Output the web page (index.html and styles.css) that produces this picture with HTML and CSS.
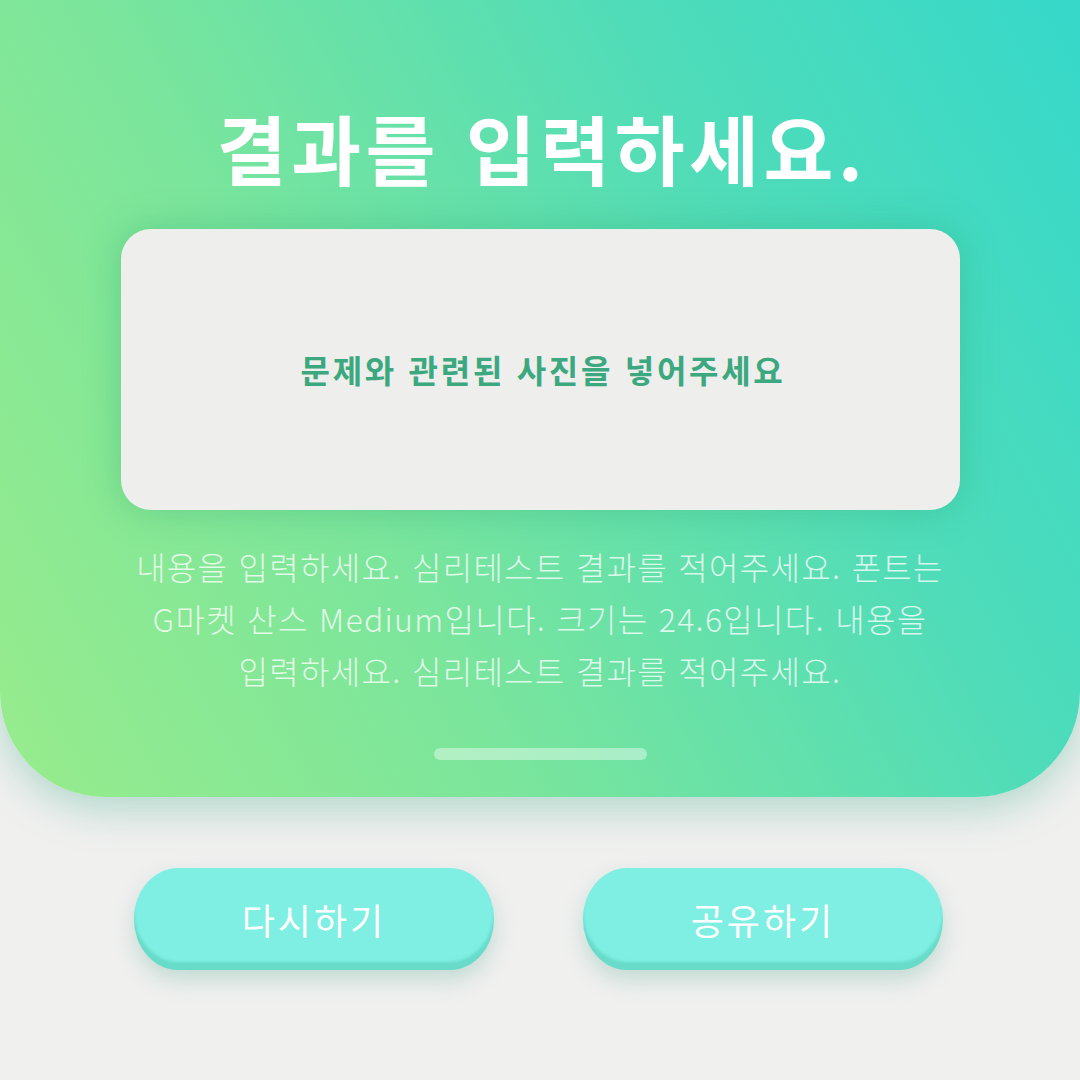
FILE: index.html
```html
<!DOCTYPE html>
<html lang="ko">
<head>
<meta charset="utf-8">
<link rel="stylesheet" href="styles.css">
</head>
<body>
<div class="page">
  <section class="panel">
    <h1 class="title">결과를 입력하세요.</h1>
    <div class="photo-card">
      <span class="photo-text">문제와 관련된 사진을 넣어주세요</span>
    </div>
    <p class="desc">내용을 입력하세요. 심리테스트 결과를 적어주세요. 폰트는<br>G마켓 산스 Medium입니다. 크기는 24.6입니다. 내용을<br>입력하세요. 심리테스트 결과를 적어주세요.</p>
    <div class="home-bar"></div>
  </section>
  <div class="actions">
    <button class="btn">다시하기</button>
    <button class="btn">공유하기</button>
  </div>
</div>
</body>
</html>
```
FILE: styles.css
```css
html, body {
  margin: 0;
  padding: 0;
}
body {
  background: #f0f0ef;
  font-family: "Noto Sans CJK KR", "Noto Sans", sans-serif;
  width: 1080px;
  height: 1080px;
  overflow: hidden;
}
.page {
  display: flex;
  flex-direction: column;
  align-items: center;
}
.panel {
  width: 1080px;
  height: 797px;
  box-sizing: border-box;
  border-radius: 0 0 105px 105px;
  background: linear-gradient(62deg, #98ec8c 0%, #7ae59c 35%, #4fdcb9 70%, #36d8ca 100%);
  box-shadow: 0 12px 40px rgba(60, 170, 140, 0.35);
  display: flex;
  flex-direction: column;
  align-items: center;
  padding-top: 95px;
}
.title {
  margin: 0;
  color: #ffffff;
  font-size: 76px;
  font-weight: 700;
  line-height: 104px;
  letter-spacing: 4.5px;
  padding-left: 4px;
}
.photo-card {
  margin-top: 30px;
  width: 839px;
  height: 281px;
  border-radius: 30px;
  background: #eeeeec;
  box-shadow: 0 0 36px rgba(40, 160, 110, 0.35);
  display: flex;
  align-items: center;
  justify-content: center;
}
.photo-text {
  color: #3ca87f;
  font-size: 32px;
  font-weight: 700;
  letter-spacing: 2.7px;
  margin-bottom: 2px;
  padding-left: 6px;
}
.desc {
  margin: 30px 0 0;
  text-align: center;
  color: rgba(255, 255, 255, 0.78);
  font-size: 32px;
  font-weight: 300;
  line-height: 52px;
  letter-spacing: 1.3px;
}
.home-bar {
  margin-top: 52px;
  width: 213px;
  height: 12px;
  border-radius: 6px;
  background: rgba(255, 255, 255, 0.4);
}
.actions {
  margin-top: 71px;
  display: flex;
  gap: 89px;
  padding-right: 3px;
}
.btn {
  width: 360px;
  height: 102px;
  border: none;
  border-radius: 44px / 51px;
  background: #7eefe2;
  color: #ffffff;
  font-family: "Noto Sans CJK KR", "Noto Sans", sans-serif;
  font-size: 36px;
  font-weight: 400;
  letter-spacing: 3px;
  box-shadow: inset 0 -8px 3px rgba(90, 205, 185, 0.6), 0 10px 22px rgba(90, 170, 150, 0.3);
  padding: 0;
}
```
